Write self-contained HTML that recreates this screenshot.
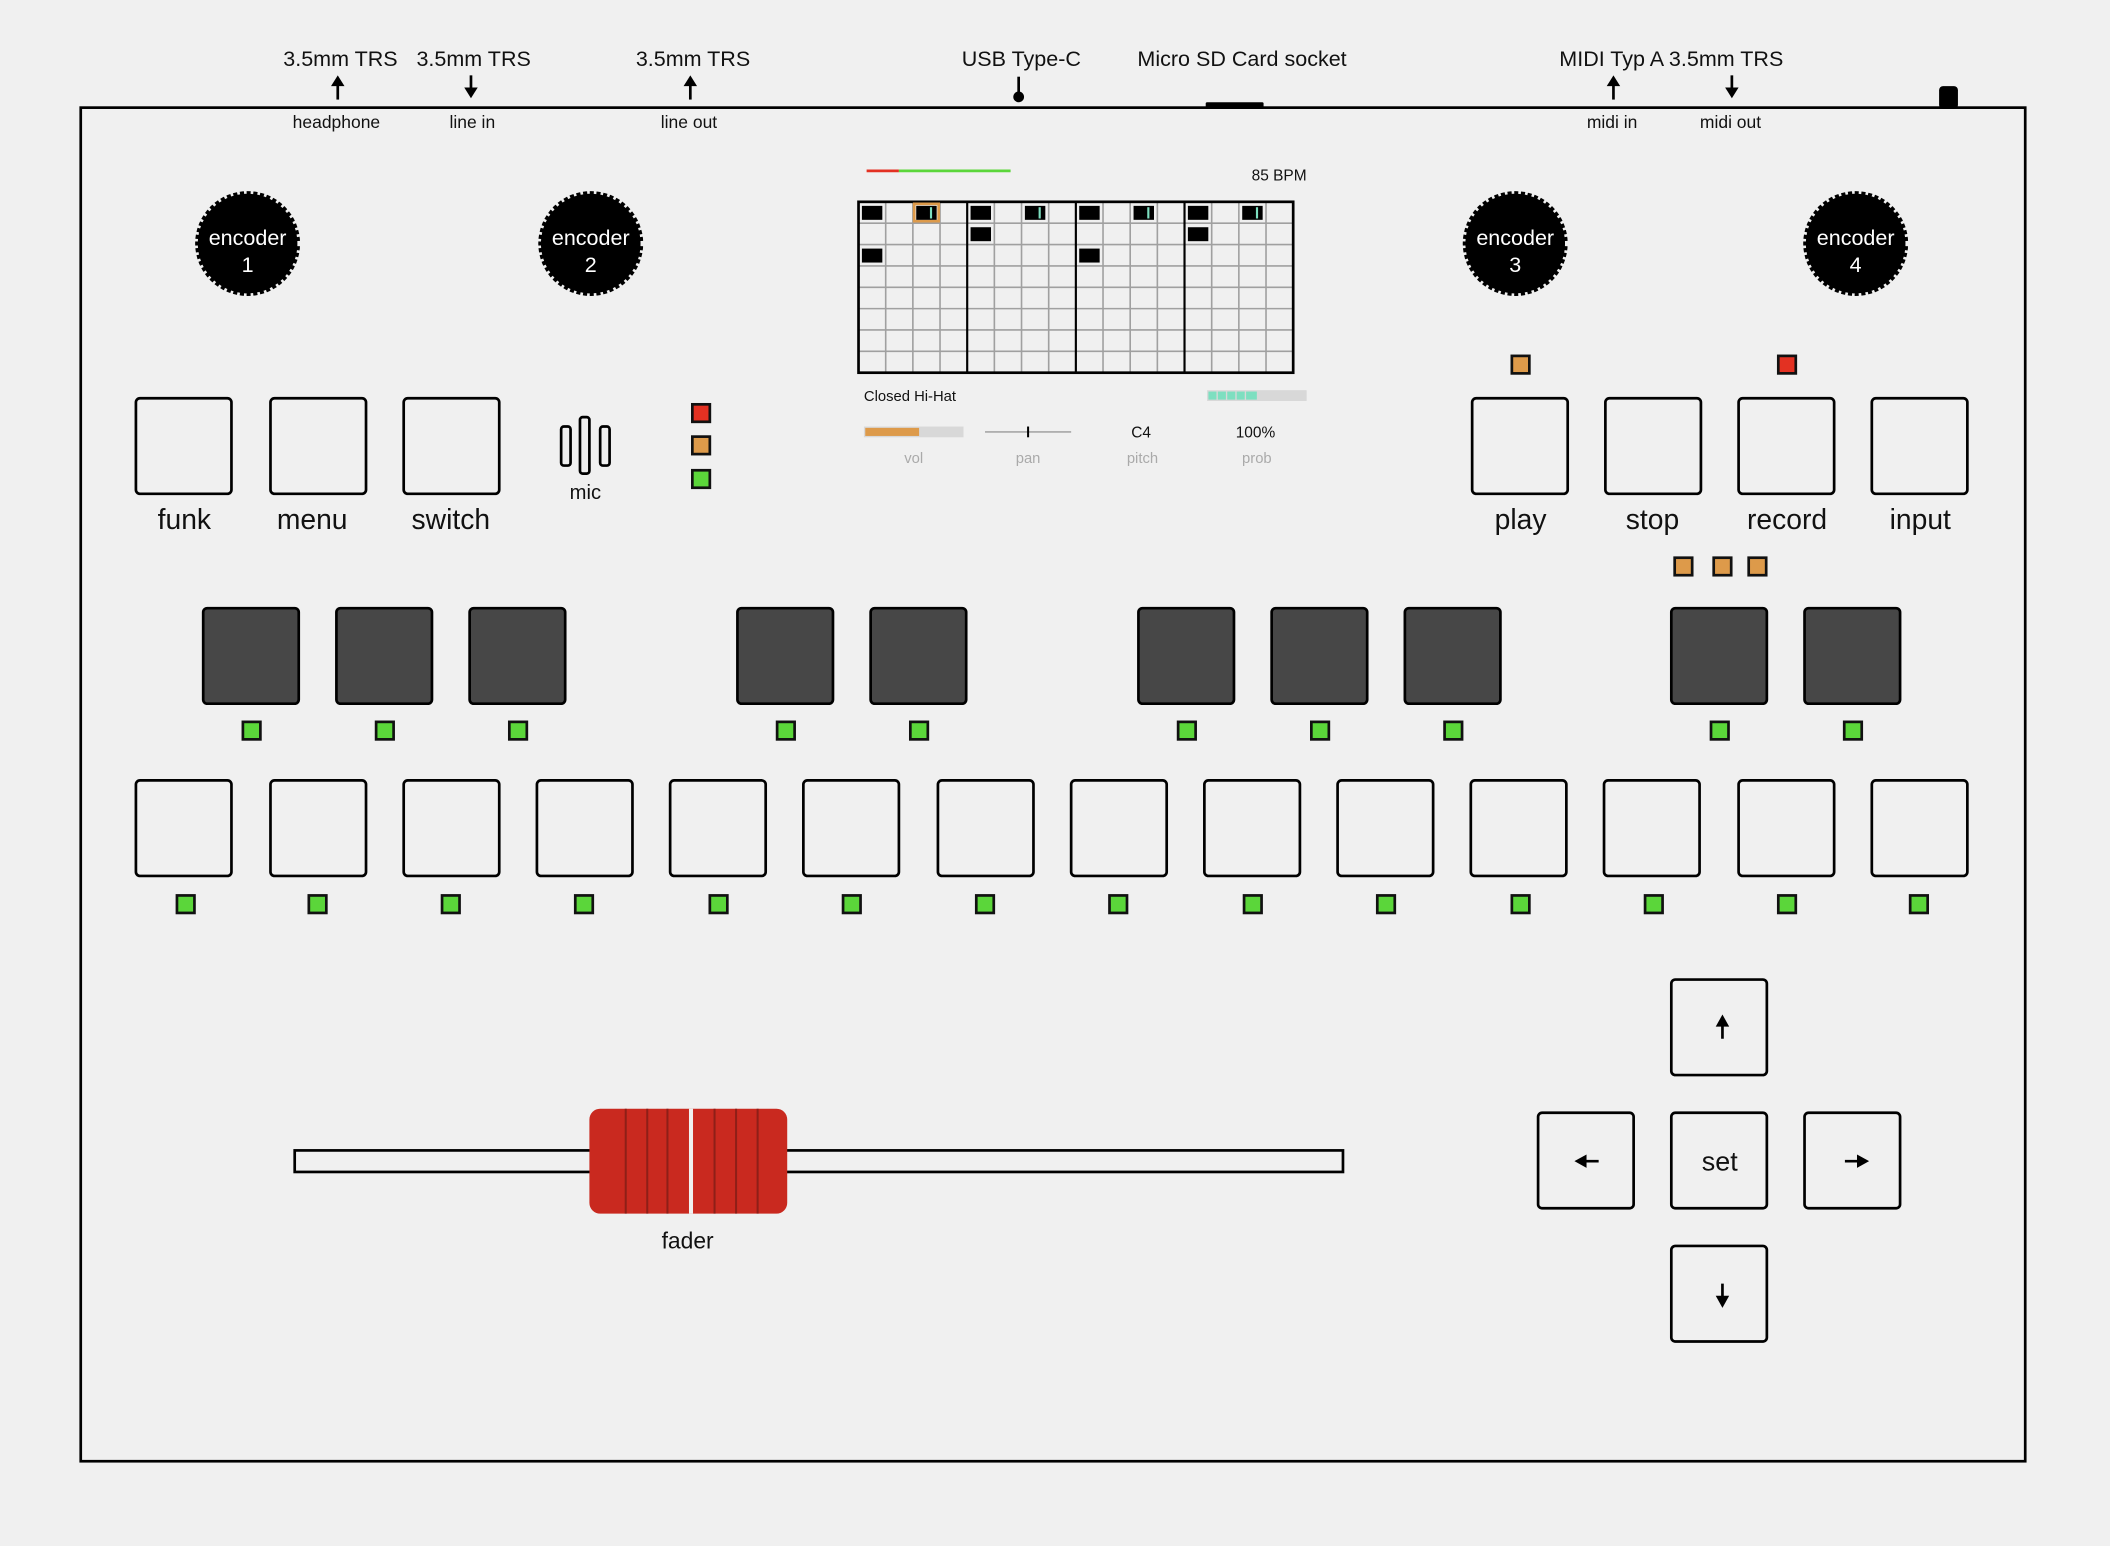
<!DOCTYPE html>
<html><head><meta charset="utf-8"><style>
html,body{margin:0;padding:0;background:#f0f0f0;}
svg{display:block;width:2110px;height:1546px;}
text{font-family:"Liberation Sans",sans-serif;fill:#111;}
</style></head><body>
<svg id="s" viewBox="0 0 1568 1149" preserveAspectRatio="none" xmlns="http://www.w3.org/2000/svg">
<rect width="1568" height="1149" fill="#f0f0f0"/>
<rect x="60" y="80" width="1445" height="1006" fill="#f0f0f0" stroke="#000" stroke-width="2"/>
<rect x="896" y="76" width="43" height="5" fill="#000" rx="1"/>
<rect x="1441" y="64" width="14" height="17" rx="3" fill="#000"/>
<g font-size="16" text-anchor="middle">
<text x="253" y="49">3.5mm TRS</text>
<text x="352" y="49">3.5mm TRS</text>
<text x="515" y="49">3.5mm TRS</text>
<text x="759" y="49">USB Type-C</text>
<text x="923" y="49">Micro SD Card socket</text>
<text x="1242" y="49">MIDI Typ A 3.5mm TRS</text>
</g>
<g font-size="13" text-anchor="middle">
<text x="250" y="95">headphone</text>
<text x="351" y="95">line in</text>
<text x="512" y="95">line out</text>
<text x="1198" y="95">midi in</text>
<text x="1286" y="95">midi out</text>
</g>
<g stroke="#000" stroke-width="2" fill="#000">
<line x1="251" y1="62" x2="251" y2="74"/><path d="M246 64 L251 56 L256 64Z" stroke="none"/>
<line x1="350" y1="56" x2="350" y2="67"/><path d="M345 65 L350 73 L355 65Z" stroke="none"/>
<line x1="513" y1="62" x2="513" y2="74"/><path d="M508 64 L513 56 L518 64Z" stroke="none"/>
<line x1="757" y1="57" x2="757" y2="70"/><circle cx="757" cy="72" r="4" stroke="none"/>
<line x1="1199" y1="62" x2="1199" y2="74"/><path d="M1194 64 L1199 56 L1204 64Z" stroke="none"/>
<line x1="1287" y1="56" x2="1287" y2="67"/><path d="M1282 65 L1287 73 L1292 65Z" stroke="none"/>
</g>
<g id="enc"></g>
<g font-size="16" text-anchor="middle">
<text x="184" y="182" style="fill:#fff">encoder</text><text x="184" y="202" style="fill:#fff">1</text>
<text x="439" y="182" style="fill:#fff">encoder</text><text x="439" y="202" style="fill:#fff">2</text>
<text x="1126" y="182" style="fill:#fff">encoder</text><text x="1126" y="202" style="fill:#fff">3</text>
<text x="1379" y="182" style="fill:#fff">encoder</text><text x="1379" y="202" style="fill:#fff">4</text>
</g>
<g id="btns"></g>
<g font-size="21" text-anchor="middle">
<text x="137" y="393">funk</text><text x="232" y="393">menu</text><text x="335" y="393">switch</text>
<text x="1130" y="393">play</text><text x="1228" y="393">stop</text><text x="1328" y="393">record</text><text x="1427" y="393">input</text>
</g>
<g fill="none" stroke="#000" stroke-width="2">
<rect x="417" y="317" width="7" height="29" rx="2"/>
<rect x="431" y="310" width="7" height="42" rx="2"/>
<rect x="446" y="317" width="7" height="29" rx="2"/>
</g>
<text x="435" y="371" font-size="15" text-anchor="middle">mic</text>
<line x1="644" y1="127" x2="668" y2="127" stroke="#e33122" stroke-width="2"/>
<line x1="668" y1="127" x2="751" y2="127" stroke="#5bd63a" stroke-width="2"/>
<text x="971" y="134" font-size="11.5" text-anchor="end">85 BPM</text>
<g id="grid"></g>
<text x="642" y="298" font-size="11">Closed Hi-Hat</text>
<rect x="897" y="290" width="74" height="8" fill="#d8d8d8"/>
<g fill="#7ddfc0"><rect x="898" y="291" width="6" height="6"/><rect x="905" y="291" width="6" height="6"/><rect x="912" y="291" width="6" height="6"/><rect x="919" y="291" width="6" height="6"/><rect x="926" y="291" width="8" height="6"/></g>
<rect x="642" y="317" width="74" height="8" fill="#d8d8d8"/>
<rect x="643" y="318" width="40" height="6" fill="#dd9a4a"/>
<line x1="732" y1="321" x2="796" y2="321" stroke="#999" stroke-width="1"/>
<line x1="764" y1="317" x2="764" y2="325" stroke="#000" stroke-width="1.5"/>
<text x="848" y="325" font-size="11.5" text-anchor="middle">C4</text>
<text x="933" y="325" font-size="11.5" text-anchor="middle">100%</text>
<g font-size="11" text-anchor="middle">
<text x="679" y="344" style="fill:#aaa">vol</text><text x="764" y="344" style="fill:#aaa">pan</text>
<text x="849" y="344" style="fill:#aaa">pitch</text><text x="934" y="344" style="fill:#aaa">prob</text>
</g>
<rect x="219" y="855" width="779" height="16" fill="#f0f0f0" stroke="#000" stroke-width="2"/>
<rect x="438" y="824" width="147" height="78" rx="8" fill="#c9291f"/>
<rect x="512" y="824" width="3" height="78" fill="#f0f0f0"/>
<g stroke="#8e1f18" stroke-width="1.5">
<line x1="465" y1="824" x2="465" y2="902"/><line x1="481" y1="824" x2="481" y2="902"/><line x1="496" y1="824" x2="496" y2="902"/>
<line x1="531" y1="824" x2="531" y2="902"/><line x1="547" y1="824" x2="547" y2="902"/><line x1="563" y1="824" x2="563" y2="902"/>
</g>
<text x="511" y="928" font-size="17" text-anchor="middle">fader</text>
<text x="1278" y="870" font-size="20" text-anchor="middle">set</text>
<g fill="#000" stroke="#000" stroke-width="2">
<line x1="1280" y1="760" x2="1280" y2="772"/><path d="M1275 763 L1280 754 L1285 763Z" stroke="none"/>
<line x1="1280" y1="954" x2="1280" y2="966"/><path d="M1275 963 L1280 972 L1285 963Z" stroke="none"/>
<line x1="1176" y1="863" x2="1188" y2="863"/><path d="M1179 858 L1170 863 L1179 868Z" stroke="none"/>
<line x1="1371" y1="863" x2="1383" y2="863"/><path d="M1380 858 L1389 863 L1380 868Z" stroke="none"/>
</g>
</svg>
<script>
var NS="http://www.w3.org/2000/svg";
function el(p,t,a){var e=document.createElementNS(NS,t);for(var k in a)e.setAttribute(k,a[k]);p.appendChild(e);return e;}
var enc=document.getElementById('enc');
[[184,181],[439,181],[1126,181],[1379,181]].forEach(function(c){
 el(enc,'circle',{cx:c[0],cy:c[1],r:39,fill:'#000'});
 el(enc,'circle',{cx:c[0],cy:c[1],r:38.5,fill:'none',stroke:'#f0f0f0','stroke-width':3,'stroke-dasharray':'2 3.1'});
});
var b=document.getElementById('btns');
function btn(x,y,fill){el(b,'rect',{x:x,y:y,width:71,height:71,rx:3,fill:fill||'#f0f0f0',stroke:'#000','stroke-width':2});}
function led(cx,cy,c){el(b,'rect',{x:cx-6.5,y:cy-6.5,width:13,height:13,fill:c,stroke:'#111','stroke-width':2});}
var R='#e33122',O='#dd9a4a',G='#5bd63a';
[101,201,300,1094,1193,1292,1391].forEach(function(x){btn(x,296);});
led(521,307,R);led(521,331,O);led(521,356,G);
led(1130,271,O);led(1328,271,R);
led(1251,421,O);led(1280,421,O);led(1306,421,O);
[151,250,349,548,647,846,945,1044,1242,1341].forEach(function(x){btn(x,452,'#474747');led(x+36,543,G);});
var bx=[101,201,300,399,498,597,697,796,895,994,1093,1192,1292,1391];
var lx=[138,236,335,434,534,633,732,831,931,1030,1130,1229,1328,1426];
bx.forEach(function(x,i){btn(x,580);led(lx[i],672,G);});
btn(1242,728);btn(1143,827);btn(1242,827);btn(1341,827);btn(1242,926);
var g=document.getElementById('grid');
var X0=638,Y0=150,W=323,H=127,cw=W/16,rh=H/8;
el(g,'rect',{x:X0,y:Y0,width:W,height:H,fill:'#f0f0f0'});
for(var i=1;i<16;i++){if(i%4)el(g,'line',{x1:X0+i*cw,y1:Y0,x2:X0+i*cw,y2:Y0+H,stroke:'#a0a0a0','stroke-width':1.2});}
for(var j=1;j<8;j++)el(g,'line',{x1:X0,y1:Y0+j*rh,x2:X0+W,y2:Y0+j*rh,stroke:'#a0a0a0','stroke-width':1.2});
for(var i=1;i<4;i++)el(g,'line',{x1:X0+i*4*cw,y1:Y0,x2:X0+i*4*cw,y2:Y0+H,stroke:'#000','stroke-width':1.6});
el(g,'rect',{x:X0,y:Y0,width:W,height:H,fill:'none',stroke:'#000','stroke-width':2});
var cells=[[0,0],[2,0,1,1],[0,2],[4,0],[6,0,1],[4,1],[8,0],[10,0,1],[8,2],[12,0],[14,0,1],[12,1]];
cells.forEach(function(c){
 var x=X0+c[0]*cw+2.5,y=Y0+c[1]*rh+3;
 if(c[3])el(g,'rect',{x:x-1.5,y:y-1.5,width:cw-2,height:rh-3,fill:'none',stroke:'#dd9a4a','stroke-width':2});
 el(g,'rect',{x:x,y:y,width:cw-5,height:rh-5.5,fill:'#000'});
 if(c[2])el(g,'rect',{x:x+cw-10,y:y+1,width:1.6,height:rh-7.5,fill:'#7ddfc0'});
});
</script>
</body></html>
